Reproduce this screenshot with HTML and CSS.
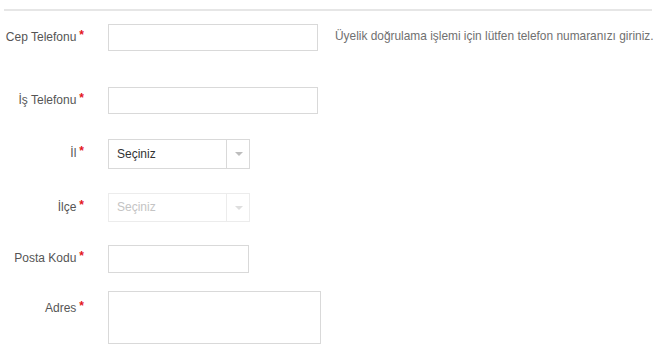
FILE: index.html
```html
<!DOCTYPE html>
<html lang="tr">
<head>
<meta charset="utf-8">
<link rel="stylesheet" href="styles.css">
</head>
<body>
<div class="page">
  <div class="rule"></div>
  <form class="form">
    <div class="row row-cep">
      <label class="label">Cep Telefonu<span class="req">*</span></label>
      <input class="field w-wide" type="text">
      <span class="help">Üyelik doğrulama işlemi için lütfen telefon numaranızı giriniz.</span>
    </div>
    <div class="row row-is">
      <label class="label">İş Telefonu<span class="req">*</span></label>
      <input class="field w-wide" type="text">
    </div>
    <div class="row row-il">
      <label class="label">İl<span class="req">*</span></label>
      <div class="select">
        <span class="select-text">Seçiniz</span>
        <span class="select-arrow"><span class="tri"></span></span>
      </div>
    </div>
    <div class="row row-ilce">
      <label class="label">İlçe<span class="req">*</span></label>
      <div class="select disabled">
        <span class="select-text">Seçiniz</span>
        <span class="select-arrow"><span class="tri"></span></span>
      </div>
    </div>
    <div class="row row-posta">
      <label class="label">Posta Kodu<span class="req">*</span></label>
      <input class="field w-short" type="text">
    </div>
    <div class="row row-adres">
      <label class="label">Adres<span class="req">*</span></label>
      <textarea class="area"></textarea>
    </div>
  </form>
</div>
</body>
</html>
```

FILE: styles.css
```css
* { box-sizing: border-box; }
html, body { margin: 0; padding: 0; background: #fff; }
body {
  font-family: "Liberation Sans", Arial, sans-serif;
  font-size: 12px;
  color: #555;
}
.page { padding: 9px 0 0 4px; }
.rule {
  width: 648px;
  height: 2px;
  background: #e6e6e6;
}
.form { display: flex; flex-direction: column; }
.row {
  display: flex;
  align-items: center;
}
.label {
  width: 80px;
  flex: none;
  text-align: right;
  margin-right: 24px;
  color: #555;
  line-height: 14px;
  position: relative;
  top: -1px;
}
.req {
  color: #e3141b;
  margin-left: 3px;
  font-size: 12px;
  font-weight: bold;
  position: relative;
  top: -2px;
}
.field {
  height: 27px;
  border: 1px solid #d9d9d9;
  background: #fff;
  margin: 0;
  padding: 0 8px;
  font: inherit;
  outline: none;
}
.w-wide { width: 210px; }
.w-short { width: 141px; height: 28px; }
.help {
  margin-left: 17px;
  color: #707070;
  font-size: 11.9px;
  position: relative;
  top: -2px;
}
.row-cep { margin-top: 13px; }
.row-is { margin-top: 36px; }
.row-il { margin-top: 25px; }
.row-ilce { margin-top: 24px; }
.row-posta { margin-top: 23px; }
.row-adres { margin-top: 18px; align-items: flex-start; }
.row-adres .label { padding-top: 11px; }

.select {
  width: 142px;
  height: 30px;
  border: 1px solid #d9d9d9;
  display: flex;
  background: #fff;
}
.select-text {
  flex: 1;
  padding-left: 8px;
  line-height: 28px;
  color: #333;
}
.select-arrow {
  width: 23px;
  border-left: 1px solid #d9d9d9;
  display: flex;
  align-items: center;
  justify-content: center;
}
.tri {
  width: 0;
  height: 0;
  border-left: 4px solid transparent;
  border-right: 4px solid transparent;
  border-top: 4px solid #bdbdbd;
  margin-left: 1px;
}
.row-ilce .select { height: 29px; }
.select.disabled { border-color: #ececec; }
.select.disabled .select-text { color: #c4c4c4; line-height: 27px; }
.select.disabled .select-arrow { border-left-color: #ececec; }
.select.disabled .tri { border-top-color: #dedede; }

.area {
  width: 213px;
  height: 53px;
  border: 1px solid #d9d9d9;
  margin: 0;
  padding: 4px 8px;
  resize: none;
  font: inherit;
  outline: none;
  display: block;
}
```
